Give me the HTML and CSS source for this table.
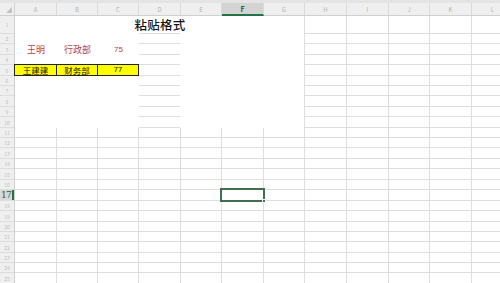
FILE: index.html
```html
<!DOCTYPE html>
<html lang="zh">
<head>
<meta charset="utf-8">
<title>粘贴格式</title>
<link rel="stylesheet" href="styles.css">
</head>
<body>
<div class="topbar"></div>
<div class="colheads">
  <div class="corner"><span class="tri"></span></div>
  <div class="ch">A</div><div class="ch">B</div><div class="ch">C</div><div class="ch">D</div>
  <div class="ch">E</div><div class="ch sel">F</div><div class="ch">G</div><div class="ch">H</div>
  <div class="ch">I</div><div class="ch">J</div><div class="ch">K</div><div class="ch">L</div>
</div>
<div class="main">
  <div class="rowheads">
    <div class="rh">1</div><div class="rh">2</div><div class="rh">3</div><div class="rh">4</div><div class="rh">5</div>
    <div class="rh">6</div><div class="rh">7</div><div class="rh">8</div><div class="rh">9</div><div class="rh">10</div>
    <div class="rh">11</div><div class="rh">12</div><div class="rh">13</div><div class="rh">14</div><div class="rh">15</div>
    <div class="rh">16</div><div class="rh sel">17</div><div class="rh">18</div><div class="rh">19</div><div class="rh">20</div>
    <div class="rh">21</div><div class="rh">22</div><div class="rh">23</div><div class="rh">24</div><div class="rh">25</div>
  </div>
  <div class="cells">
    <div class="vlines">
      <div></div><div></div><div></div><div></div><div></div><div></div>
      <div></div><div></div><div></div><div></div><div></div><div></div>
    </div>
    <div class="hlines">
      <div></div><div></div><div></div><div></div><div></div>
      <div></div><div></div><div></div><div></div><div></div>
      <div></div><div></div><div></div><div></div><div></div>
      <div></div><div></div><div></div><div></div><div></div>
      <div></div><div></div><div></div><div></div><div></div>
    </div>
    <div class="content">
      <div class="fill fill-left"></div>
      <div class="fill fill-right"></div>
      <div class="cell title">粘贴格式</div>
      <div class="cell red a3">王明</div>
      <div class="cell red b3">行政部</div>
      <div class="cell red num c3">75</div>
      <div class="cell yel a5">王建建</div>
      <div class="cell yel b5">财务部</div>
      <div class="cell yel num c5">77</div>
      <div class="active"></div>
    </div>
  </div>
</div>
</body>
</html>
```

FILE: styles.css
```css
:root {
  --cols: 42px 41px 41px 42px 41px 42px 41px 42px 42px 41px 42px 42px;
  --rows: 18px 10px 11px 10px 11px 10px 10px 11px 10px 11px 10px 10px 11px 10px 11px 10px 11px 10px 11px 10px 10px 11px 10px 10px 11px;
  --grid: #dedede;
  --green: #217346;
}

html, body {
  margin: 0;
  padding: 0;
  background: #ffffff;
  overflow: hidden;
  font-family: "Noto Sans CJK SC", "Liberation Sans", sans-serif;
}

.topbar {
  height: 3px;
  background: #e4e4e4;
}

.colheads {
  display: grid;
  grid-template-columns: 15px var(--cols);
  height: 13px;
  background: #efefef;
  border-bottom: 1px solid #d0d0d0;
  box-sizing: border-box;
}

.corner {
  display: flex;
  justify-content: flex-end;
  align-items: flex-end;
  border-right: 1px solid #d0d0d0;
  padding: 0 2px 2px 0;
}

.tri {
  width: 0;
  height: 0;
  border-left: 6px solid transparent;
  border-bottom: 6px solid #c2c2c2;
}

.ch {
  display: flex;
  justify-content: center;
  align-items: center;
  font-size: 6px;
  color: #b4b4b4;
  border-right: 1px solid #dadada;
}

.ch.sel {
  background: #d3d3d3;
  color: #1e5e38;
  font-weight: bold;
  font-size: 7px;
  border-bottom: 2px solid var(--green);
  margin-bottom: -1px;
}

.main {
  display: flex;
}

.rowheads {
  display: grid;
  grid-template-rows: var(--rows);
  width: 15px;
  flex: none;
  background: #efefef;
  border-right: 1px solid #cfcfcf;
  box-sizing: border-box;
}

.rh {
  display: flex;
  justify-content: center;
  align-items: center;
  font-size: 5px;
  color: #bcbcbc;
  border-bottom: 1px solid #dddddd;
  overflow: hidden;
}

.rh.sel {
  background: #d9d9d9;
  color: #33553d;
  font-family: "DejaVu Serif", "Liberation Serif", serif;
  font-size: 9px;
  letter-spacing: -0.8px;
  justify-content: flex-start;
  padding-left: 1px;
  box-shadow: inset -2px 0 0 var(--green);
}

.cells {
  display: grid;
  grid-template-columns: 1fr;
  grid-template-rows: 1fr;
  flex: 1;
}

.vlines, .hlines, .content {
  grid-area: 1 / 1;
  display: grid;
}

.vlines {
  grid-template-columns: var(--cols);
}

.vlines > div {
  border-right: 1px solid var(--grid);
}

.hlines {
  grid-template-rows: var(--rows);
}

.hlines > div {
  border-bottom: 1px solid var(--grid);
}

.content {
  grid-template-columns: var(--cols);
  grid-template-rows: var(--rows);
}

.fill {
  background: #ffffff;
}

.fill-left {
  grid-column: 1 / 4;
  grid-row: 1 / 11;
}

.fill-right {
  grid-column: 5 / 8;
  grid-row: 1 / 11;
  margin-left: -1px;
  margin-right: 1px;
}

.cell {
  display: flex;
  justify-content: center;
  align-items: center;
  white-space: nowrap;
  font-size: 9px;
  line-height: 1;
  box-sizing: border-box;
}

.title {
  grid-column: 4;
  grid-row: 1;
  font-size: 12.5px;
  font-weight: 500;
  color: #151515;
  letter-spacing: 0.3px;
  padding-top: 1px;
}

.red {
  color: #b9434b;
}

.num {
  font-family: "Liberation Sans", sans-serif;
  font-size: 8px;
}

.a3 { grid-column: 1; grid-row: 3; }
.b3 { grid-column: 2; grid-row: 3; }
.c3 { grid-column: 3; grid-row: 3; }

.yel {
  background: #ffff00;
  color: #111111;
  font-size: 8.5px;
  border: 1px solid #222222;
  margin: -1px 0 0 -1px;
}

.yel.num {
  font-size: 7.5px;
}

.a5 { grid-column: 1; grid-row: 5; }
.b5 { grid-column: 2; grid-row: 5; }
.c5 { grid-column: 3; grid-row: 5; }

.active {
  grid-column: 6;
  grid-row: 17;
  border: 2px solid #3f6e50;
  margin: -2px -1px -1px -2px;
  position: relative;
}

.active::after {
  content: "";
  position: absolute;
  right: -3px;
  bottom: -3px;
  width: 4px;
  height: 4px;
  background: #3f6e50;
  border: 1px solid #ffffff;
  box-sizing: border-box;
}
```
